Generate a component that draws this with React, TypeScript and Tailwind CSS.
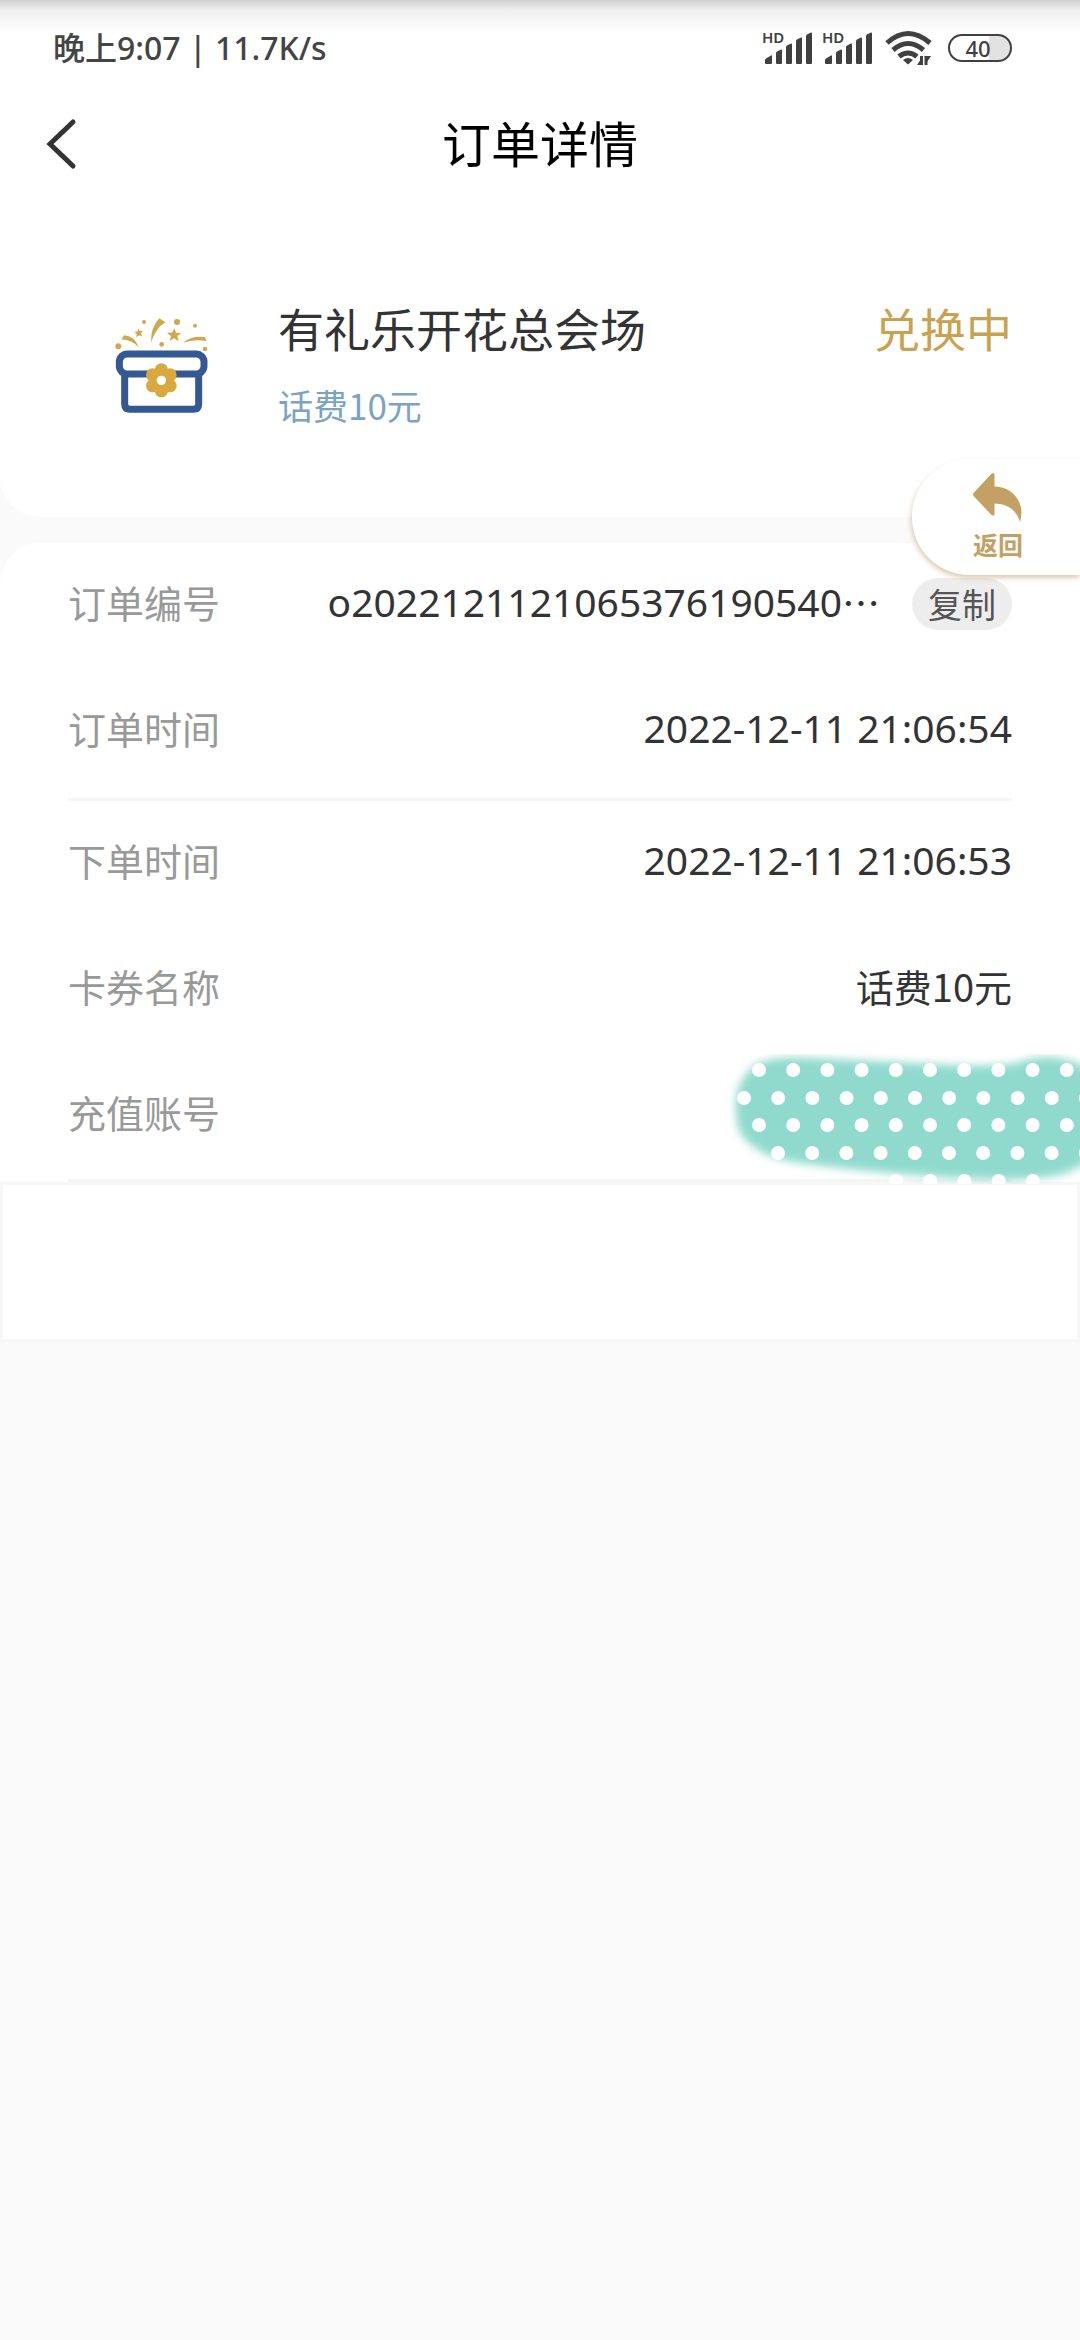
import React from 'react';

interface OrderField {
  label: string;
  value?: string;
  numeric?: boolean;
}

const times: OrderField = { label: '订单时间', value: '2022-12-11 21:06:54', numeric: true };

const details: OrderField[] = [
  { label: '下单时间', value: '2022-12-11 21:06:53', numeric: true },
  { label: '卡券名称', value: '话费10元' },
];

function SignalIcon() {
  return (
    <div className="relative">
      <svg viewBox="0 0 50 34" className="h-[34px] w-[50px]" fill="#404040" aria-hidden="true">
        <path d="M2 32v-3q0-1 1-1.600l5-3q1-.4 1 1v6.600q0 1-1 1H3q-1 0-1-1z" />
        <path d="M13 32V22q0-1 1-1.500l4-2q1-.4 1 1V32q0 1-1 1h-4q-1 0-1-1z" />
        <path d="M23 32V16q0-1 1-1.500l4-2q1-.4 1 1V32q0 1-1 1h-4q-1 0-1-1z" />
        <path d="M33 32V10q0-1 1-1.500l4-2q1-.4 1 1V32q0 1-1 1h-4q-1 0-1-1z" />
        <path d="M43 32V5q0-1 1-1.500l4-2q1-.4 1 1V32q0 1-1 1h-4q-1 0-1-1z" />
      </svg>
      <span className="absolute -top-1 -left-px font-['Noto_Sans',sans-serif] text-[15px] leading-5 font-semibold text-[#404040]">
        HD
      </span>
    </div>
  );
}

function WifiIcon() {
  return (
    <svg viewBox="0 0 47 36" className="h-9 w-[47px]" fill="none" stroke="#404040" strokeWidth="5" aria-hidden="true">
      <path d="M2 13Q23-6 45 13" />
      <path d="M8 20Q23 7 38.500 20" />
      <path d="M14 26.500Q23 19.500 32 26.500" />
      <path d="M18 30q5-4 10 0l-5 4.500z" fill="#404040" stroke="none" />
      <path d="M36.500 26v9M41 26v9" strokeWidth="3" />
      <path d="M38 35h-6l4-6zM39.500 26H46l-4 6z" fill="#404040" stroke="none" />
    </svg>
  );
}

function GiftIcon() {
  return (
    <svg viewBox="0 0 390 390" className="size-[130px] shrink-0" fill="none" aria-hidden="true">
      <g stroke="#345892">
        <rect x="58" y="162" width="254" height="60" rx="24" strokeWidth="21" />
        <path d="M74 222v90q0 16 16 16h190q16 0 16-16v-90" strokeWidth="21" />
      </g>
      <g fill="#d9a93f">
        <circle cx="184" cy="210" r="20" />
        <circle cx="210" cy="225" r="20" />
        <circle cx="210" cy="257" r="20" />
        <circle cx="184" cy="272" r="20" />
        <circle cx="158" cy="257" r="20" />
        <circle cx="158" cy="225" r="20" />
        <circle cx="184" cy="241" r="32" />
      </g>
      <circle cx="184" cy="241" r="14" fill="#fff" />
      <g fill="#d0a850">
        <circle cx="55" cy="139" r="9" />
        <circle cx="132" cy="66" r="6" />
        <circle cx="231" cy="66" r="9" />
        <circle cx="285" cy="77" r="6" />
        <circle cx="185" cy="133" r="7" />
        <circle cx="315" cy="147" r="7" />
        <path d="M64 118l8-12q32 2 45 37-22-24-53-25z" />
        <path d="M153 128q-2-45 25-73l18 12q-28 16-43 61z" />
        <path d="M250 128q24-22 65-17l4 12q-36-7-69 5z" />
        <path d="M115 85l4 8 10-1-6 8 4 10-9-4-9 6 1-10-7-6 10-2z" />
        <path d="M223 85l5 13 16 1-12 9 4 16-14-9-13 8 4-15-12-9 16-2z" />
      </g>
    </svg>
  );
}

function ReturnIcon() {
  return (
    <svg viewBox="0 0 49 49" className="size-[49px]" fill="#c3a063" aria-hidden="true">
      <path d="M1 19.500 18.500.8q3-2 3 1.200v11.500C39 13.500 53 29 47 49 43 36 34 31 21.500 30.500V41q0 3-3 1L1 23.500q-2-2 0-4z" />
    </svg>
  );
}

// Sticker stroke that covers the account number
function Sticker() {
  const rows = [
    { y: 16, x: 39, count: 10 },
    { y: 44, x: 24, count: 11 },
    { y: 71, x: 39, count: 10 },
    { y: 99, x: 58, count: 10 },
    { y: 127, x: 176, count: 5 },
  ];
  return (
    <svg viewBox="0 0 360 130" className="absolute top-px -right-17 h-[130px] w-[360px]" aria-label="已遮挡" role="img">
      <defs>
        <filter id="soft" x="-10%" y="-10%" width="120%" height="120%">
          <feGaussianBlur stdDeviation="4" />
        </filter>
      </defs>
      <path
        d="M38 9Q60 2 90 4q70 3 140 7 40 2 66-2 30-10 50-3 20 3 30 20v72q-10 14-32 22-24 6-64 6-100-3-200-17Q30 102 18 74 8 30 38 9z"
        fill="#90dacd"
        filter="url(#soft)"
      />
      {rows.map(row =>
        Array.from({ length: row.count }, (_, i) => (
          <circle key={`${row.y}-${i}`} cx={row.x + i * 34.2} cy={row.y} r="7" fill="#fff" />
        ))
      )}
    </svg>
  );
}

function Row({ label, children }: { label: string; children?: React.ReactNode }) {
  return (
    <div className="relative flex h-[126px] items-center justify-between pb-2">
      <dt className="shrink-0 text-[38px] leading-[50px] text-[#999]">{label}</dt>
      <dd className="flex items-center text-[#333]">{children}</dd>
    </div>
  );
}

function FieldValue({ field }: { field: OrderField }) {
  return field.numeric ? (
    <span className="font-['Noto_Sans','Noto_Sans_CJK_SC',sans-serif] text-[39px] leading-[50px]">{field.value}</span>
  ) : (
    <span className="text-[38px] leading-[50px]">{field.value}</span>
  );
}

export default function App() {
  return (
    <div className="relative min-h-screen overflow-x-hidden bg-[#fafafa] font-['Noto_Sans_CJK_SC',sans-serif] text-[#333]">
      <section className="rounded-b-[40px] bg-white">
        <div className="flex h-24 items-center justify-between bg-linear-to-b from-[#d0d0d0] via-[#eeeeee] via-10% to-white to-35% pr-17 pl-[53px]">
          <span className="font-['Noto_Sans','Noto_Sans_CJK_SC',sans-serif] text-[32px] font-medium text-[#444]">
            晚上9:07 | 11.7K/s
          </span>
          <div className="flex items-center">
            <SignalIcon />
            <span className="w-[10px]" />
            <SignalIcon />
            <span className="w-3" />
            <WifiIcon />
            <span className="w-4" />
            <span className="flex h-7 w-[64px] items-center justify-center rounded-full border-2 border-[#404040] bg-linear-to-r from-white from-65% to-[#e2e2e2] to-65% pr-1 font-['Noto_Sans',sans-serif] text-[22px] leading-6 font-medium text-[#404040]">
              40
            </span>
          </div>
        </div>

        <header className="grid h-24 grid-cols-[1fr_auto_1fr] items-center px-11">
          <button type="button" aria-label="返回上一页" className="justify-self-start">
            <svg viewBox="0 0 34 56" className="h-14 w-[34px]" fill="none" stroke="#333" strokeWidth="5" strokeLinecap="round">
              <path d="M29 6 6 28l23 22" />
            </svg>
          </button>
          <h1 className="pb-1 text-[49px] leading-[70px] text-black">订单详情</h1>
        </header>

        <div className="flex items-start gap-12 pt-[108px] pr-17 pb-[87px] pl-[100px]">
          <GiftIcon />
          <div className="flex-1">
            <div className="flex items-center justify-between text-[46px] leading-[54px]">
              <h2>有礼乐开花总会场</h2>
              <span className="text-[#c9a14f]">兑换中</span>
            </div>
            <p className="mt-7 text-[35px] leading-[46px] text-[#7ba3c4]">话费10元</p>
          </div>
        </div>
      </section>

      <dl className="mt-[26px] rounded-t-[40px] bg-white px-17">
        <div className="border-b-3 border-[#f5f5f5] pb-[3px]">
          <Row label="订单编号">
            <span className="font-['Noto_Sans','Noto_Sans_CJK_SC',sans-serif] text-[39px] leading-[50px]">
              o2022121121065376190540
            </span>
            <span className="text-[38px] leading-[50px]">⋯</span>
            <button type="button" className="mt-1 ml-8 h-[52px] rounded-full bg-[#ededed] px-4 text-[34px] leading-[50px] text-[#555]">
              复制
            </button>
          </Row>
          <Row label={times.label}>
            <FieldValue field={times} />
          </Row>
        </div>
        <div className="border-b-3 border-[#f5f5f5]">
          {details.map(field => (
            <Row key={field.label} label={field.label}>
              <FieldValue field={field} />
            </Row>
          ))}
          <Row label="充值账号">
            <Sticker />
          </Row>
        </div>
      </dl>

      <div className="h-40 border-3 border-[#f7f7f7] bg-white" />

      <button
        type="button"
        className="absolute top-[459px] right-0 flex h-[116px] w-[168px] flex-col items-start rounded-l-full bg-white/90 pt-[14px] pl-[61px] text-[#c3a063] shadow-[-1px_3px_5px_rgba(180,140,80,0.45)]"
      >
        <ReturnIcon />
        <span className="mt-[6px] text-[25px] leading-8 font-bold">返回</span>
      </button>
    </div>
  );
}
